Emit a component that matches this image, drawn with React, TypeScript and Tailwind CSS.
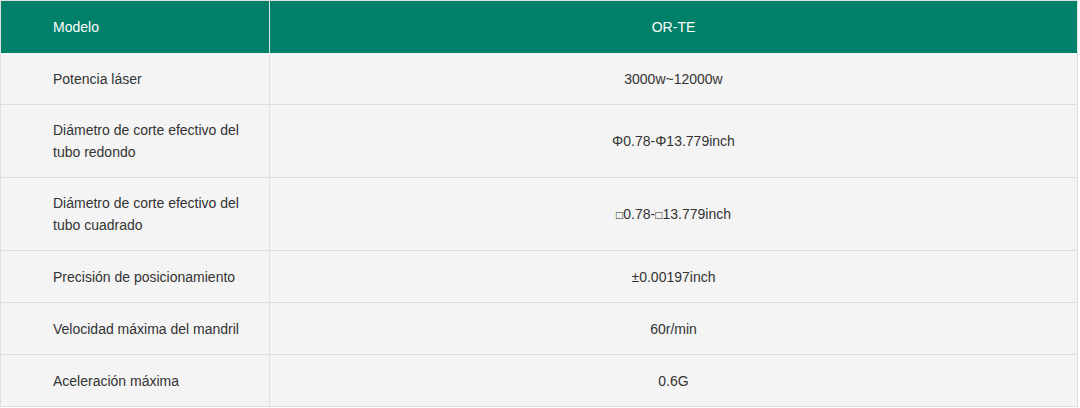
import type { ReactNode } from 'react'

const Sq = () => <span className="text-[12px] leading-none">□</span>

const ROWS: { label: string; value: ReactNode; tall?: boolean }[] = [
  { label: 'Potencia láser', value: '3000w~12000w' },
  { label: 'Diámetro de corte efectivo del tubo redondo', value: 'Φ0.78-Φ13.779inch', tall: true },
  {
    label: 'Diámetro de corte efectivo del tubo cuadrado',
    value: <span><Sq />0.78-<Sq />13.779inch</span>,
    tall: true,
  },
  { label: 'Precisión de posicionamiento', value: '±0.00197inch' },
  { label: 'Velocidad máxima del mandril', value: '60r/min' },
  { label: 'Aceleración máxima', value: '0.6G' },
]

export default function App() {
  return (
    <div className="w-[1080px] h-[408px] bg-white font-['Liberation_Sans',Arial,sans-serif] text-[14px] leading-[22px] text-[#333]">
      <div className="w-[1078px] border-t border-l border-[#e0e0e0]">
        {/* header */}
        <div className="flex h-[52px] bg-[#008068] text-white">
          <div className="w-[269px] flex items-center pl-[52px] border-r border-[#d8ece6]">Modelo</div>
          <div className="flex-1 flex items-center justify-center border-r border-[#e0e0e0]">OR-TE</div>
        </div>

        {ROWS.map(r => (
          <div key={r.label} className={`flex bg-[#f4f4f4] border-b border-[#dedede] ${r.tall ? 'h-[73px]' : 'h-[52px]'}`}>
            <div className="w-[269px] flex items-center pl-[52px] pr-[20px] border-r border-[#dedede]">{r.label}</div>
            <div className="flex-1 flex items-center justify-center border-r border-[#dedede]">{r.value}</div>
          </div>
        ))}
      </div>
    </div>
  )
}
